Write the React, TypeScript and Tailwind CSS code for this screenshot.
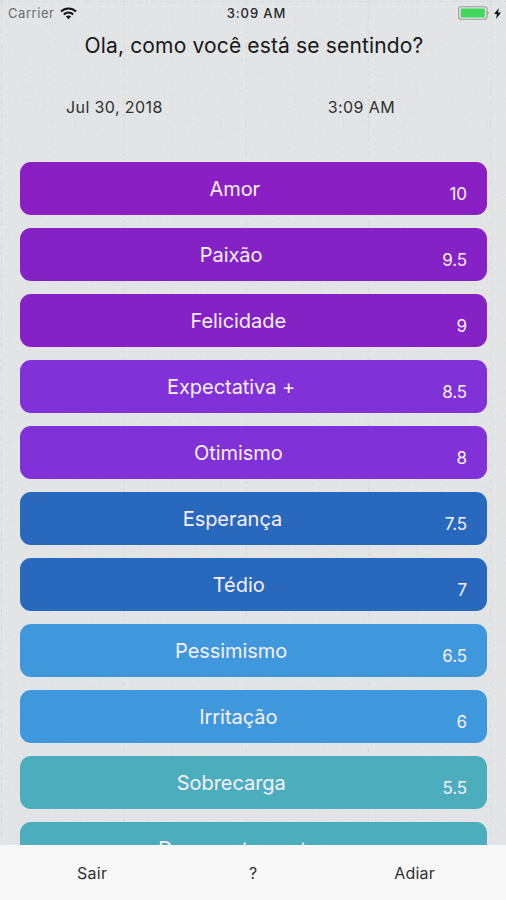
type Mood = { label: string; score: string; color: string };

const moods: Mood[] = [
  { label: 'Amor', score: '10', color: 'bg-[#8a20c4]' },
  { label: 'Paixão', score: '9.5', color: 'bg-[#8522c6]' },
  { label: 'Felicidade', score: '9', color: 'bg-[#8522c6]' },
  { label: 'Expectativa +', score: '8.5', color: 'bg-[#8031d7]' },
  { label: 'Otimismo', score: '8', color: 'bg-[#8031d7]' },
  { label: 'Esperança', score: '7.5', color: 'bg-[#2969bd]' },
  { label: 'Tédio', score: '7', color: 'bg-[#2969bd]' },
  { label: 'Pessimismo', score: '6.5', color: 'bg-[#3f98dc]' },
  { label: 'Irritação', score: '6', color: 'bg-[#3f98dc]' },
  { label: 'Sobrecarga', score: '5.5', color: 'bg-[#4caebc]' },
  { label: 'Desapontamento', score: '5', color: 'bg-[#4caebc]' },
];

function Paper() {
  return (
    <svg className="pointer-events-none absolute inset-0" width="506" height="900" aria-hidden="true">
      <defs>
        <filter id="grain" x="0" y="0" width="100%" height="100%">
          <feTurbulence type="fractalNoise" baseFrequency="0.35" numOctaves="2" seed="4" />
          <feColorMatrix values="0 0 0 0 0.45  0 0 0 0 0.47  0 0 0 0 0.48  0.35 0 0 0 -0.1" />
        </filter>
        <pattern id="minor" width="122.3" height="122" x="1" y="1" patternUnits="userSpaceOnUse">
          <path d="M0.5 0V122M0 0.5H122" stroke="#c6c9cb" strokeOpacity=".4" strokeDasharray="5 3 2 4" />
          <path d="M25 0V122M49 0V122M74 0V122M98 0V122M0 25H122M0 49H122M0 74H122M0 98H122" stroke="#d2d5d7" strokeOpacity=".25" strokeDasharray="3 4" />
        </pattern>
      </defs>
      <rect width="506" height="900" filter="url(#grain)" opacity=".3" />
      <rect width="506" height="900" fill="url(#minor)" />
    </svg>
  );
}

function StatusBar() {
  return (
    <header className="grid h-[26px] grid-cols-3 items-center pl-2 pr-[5px] text-[13px] leading-none">
      <div className="flex items-center gap-[6px] text-[#6c6d6f]">
        <span className="tracking-[0.55px]">Carrier</span>
        <svg width="17" height="13" viewBox="0 0 17 13" fill="none" stroke="#161616" strokeWidth="2.1">
          <path d="M1 4.6C5.2.5 11.8.5 16 4.6M3.8 7.5C6.6 5 10.4 5 13.2 7.5" />
          <path d="M5.9 9.5C7.4 8.3 9.6 8.3 11.1 9.5L8.5 12.2Z" fill="#161616" stroke="none" />
        </svg>
      </div>
      <span className="pl-[4px] text-center font-medium tracking-[0.9px] text-[#27282a]">3:09 AM</span>
      <div className="flex items-center justify-end gap-[4px]">
        <svg width="32" height="14" viewBox="0 0 32 14">
          <rect x=".7" y=".7" width="28.2" height="12.6" rx="2" fill="#e3e5e5" stroke="#999c9b" strokeWidth="1.1" />
          <rect x="2.8" y="2.5" width="24" height="9" rx=".5" fill="#43d65d" />
          <path d="M29.4 4.5Q32 7 29.4 9.5Z" fill="#999c9b" />
        </svg>
        <svg width="7" height="11" viewBox="0 0 6 11" preserveAspectRatio="none">
          <path d="M4.2 0L0 6H2.5L1.8 11L6 4.5H3.4Z" fill="#111" />
        </svg>
      </div>
    </header>
  );
}

function MoodButton({ label, score, color }: Mood) {
  return (
    <button className={`flex h-[53.4px] w-full shrink-0 items-center rounded-[11px] pr-5 text-[#f8f0ff] ${color}`}>
      <span className="flex-1 text-center text-[20px] tracking-[-0.05px]">{label}</span>
      <span className="pt-3 text-[17px] tracking-[-0.1px]">{score}</span>
    </button>
  );
}

export default function App() {
  return (
    <div className="relative flex h-[900px] w-[506px] flex-col overflow-hidden bg-[#e3e5e6] font-['Inter','Liberation_Sans',sans-serif]">
      <Paper />
      <div className="relative flex min-h-0 flex-1 flex-col">
        <StatusBar />
        <h1 className="h-10 pl-[2px] text-center text-[21px] leading-10 tracking-[0.15px] text-[#171819]">
          Ola, como você está se sentindo?
        </h1>
        <div className="flex h-[96px] justify-between pl-[66px] pr-[111px] pt-[30px] text-[16px] leading-[22px] tracking-[0.4px] text-[#303133]">
          <span>Jul 30, 2018</span>
          <span>3:09 AM</span>
        </div>
        <main className="flex min-h-0 flex-1 flex-col gap-[12.6px] overflow-hidden pl-5 pr-[19px]">
          {moods.map((mood) => <MoodButton key={mood.score} {...mood} />)}
        </main>
      </div>
      <footer className="relative grid h-[55px] shrink-0 grid-cols-3 items-center bg-[#f8f8f8] text-[16px] text-[#303030]">
        <button className="pl-[77px] text-left tracking-[0.3px]">Sair</button>
        <button>?</button>
        <button className="pr-[71px] text-right tracking-[0.2px]">Adiar</button>
      </footer>
    </div>
  );
}
